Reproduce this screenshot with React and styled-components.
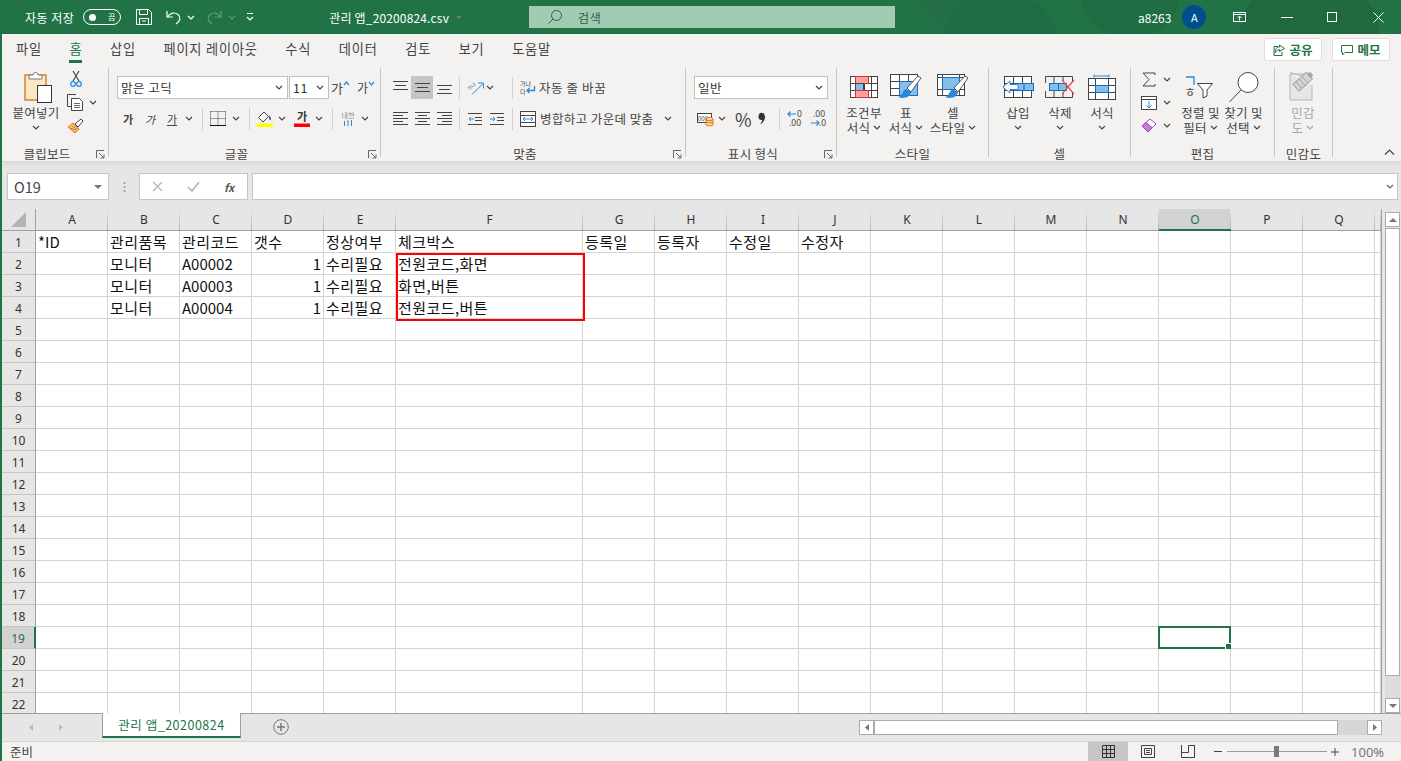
import React from "react";
import styled, { createGlobalStyle } from "styled-components";

const FONT = `"Noto Sans CJK KR", "Noto Sans", sans-serif`;
const GREEN = "#217346";
const DARK = "#444";
const BLUE = "#2b88d8";
const LIGHTBLUE = "#83beec";

const GlobalStyle = createGlobalStyle`
  html, body { margin: 0; padding: 0; height: 100%; overflow: hidden; background: #e6e6e6; }
  #root { height: 100%; }
  * { box-sizing: border-box; }
  svg { display: block; flex: none; overflow: visible; }
`;

const Window = styled.div`
  width: 1401px;
  height: 761px;
  display: flex;
  flex-direction: column;
  font-family: ${FONT};
  color: #444;
  overflow: hidden;
`;

/* ---------- title bar ---------- */
const TitleBar = styled.div`
  height: 34px;
  flex: none;
  display: flex;
  align-items: center;
  color: #fff;
  background-color: ${GREEN};
  background-image:
    radial-gradient(circle at 1000px 50px, #1f6d43 60px, transparent 61px),
    radial-gradient(circle at 1130px -10px, #1f6d43 50px, transparent 51px),
    radial-gradient(circle at 1310px 40px, #20693f 70px, transparent 71px),
    radial-gradient(circle at 950px -5px, #256f48 30px, transparent 31px);
`;

const Slot = styled.div`
  width: ${(p) => p.$w}px;
  margin-left: ${(p) => p.$ml || 0}px;
  flex: none;
  display: flex;
  align-items: center;
  justify-content: center;
`;

const TitleText = styled.span`
  margin-left: ${(p) => p.$ml || 0}px;
  font-size: ${(p) => p.$size || 12}px;
  letter-spacing: ${(p) => p.$ls || 0}px;
  white-space: nowrap;
`;

const Toggle = styled.div`
  width: 38px;
  height: 16px;
  margin-left: 9px;
  border: 1px solid #fff;
  border-radius: 8px;
  display: flex;
  align-items: center;
  padding: 0 5px;
  justify-content: space-between;
  font-size: 8px;
  line-height: 14px;
  &::before {
    content: "";
    width: 7px;
    height: 7px;
    border-radius: 50%;
    background: #fff;
  }
`;

const SearchBox = styled.div`
  width: 366px;
  height: 22px;
  margin-left: 66px;
  background: #a0cbb2;
  display: flex;
  align-items: center;
  padding-left: 19px;
  color: #2c5f43;
  font-size: 12px;
`;

const Avatar = styled.div`
  width: 24px;
  height: 24px;
  margin-left: 11px;
  border-radius: 50%;
  background: #004e8c;
  display: flex;
  align-items: center;
  justify-content: center;
  font-size: 11px;
`;

/* ---------- body under the title, with green edge ---------- */
const Main = styled.div`
  flex: 1;
  min-height: 0;
  display: flex;
  flex-direction: column;
  border-left: 2px solid ${GREEN};
`;

const TabStrip = styled.div`
  height: 32px;
  flex: none;
  background: #f3f2f1;
  display: flex;
  align-items: flex-start;
  padding: 4px 11px 0 14px;
  gap: 27.6px;
`;

const Tab = styled.div`
  height: 25px;
  line-height: 21px;
  font-size: 13.2px;
  letter-spacing: 0.8px;
  white-space: nowrap;
  color: ${(p) => (p.$active ? "#217346" : "#444")};
  border-bottom: 3px solid ${(p) => (p.$active ? GREEN : "transparent")};
`;

const TabSpacer = styled.div`
  flex: 1;
`;

const ShareBtn = styled.div`
  width: 58px;
  height: 23px;
  background: #fff;
  border: 1px solid #e1dfdd;
  border-radius: 2px;
  display: flex;
  align-items: center;
  justify-content: center;
  gap: 4px;
  font-size: 12.5px;
  font-weight: 700;
  color: ${GREEN};
`;

const ShareWrap = styled.div`
  display: flex;
  gap: 10px;
`;

/* ---------- ribbon ---------- */
const Ribbon = styled.div`
  height: 95px;
  flex: none;
  background: #f3f2f1;
  display: flex;
  padding: 2px 0 4px 0;
`;

const Group = styled.div`
  width: ${(p) => p.$w}px;
  flex: none;
  display: flex;
  flex-direction: column;
  border-right: 1px solid #c8c6c4;
`;

const GroupBody = styled.div`
  flex: 1;
  min-height: 0;
  display: flex;
  padding-left: ${(p) => p.$pl || 0}px;
`;

const GroupFoot = styled.div`
  height: 12px;
  flex: none;
  padding-top: 2px;
  display: grid;
  grid-template-columns: 1fr auto 1fr;
  align-items: center;
  font-size: 12.5px;
  letter-spacing: 0.3px;
  line-height: 14px;
  span { grid-column: 2; transform: translateX(${(p) => p.$shift || 0}px); white-space: nowrap; }
  svg { grid-column: 3; justify-self: end; margin-right: 3px; }
`;

const Rows = styled.div`
  display: flex;
  flex-direction: column;
  gap: 8px;
  padding-top: 8px;
`;

const ToolRow = styled.div`
  height: 23px;
  display: flex;
  align-items: center;
`;

const StackCol = styled.div`
  width: ${(p) => p.$w}px;
  margin-left: ${(p) => p.$ml || 0}px;
  flex: none;
  display: flex;
  flex-direction: column;
`;

const Picker = styled.div`
  width: ${(p) => p.$w}px;
  height: 23px;
  margin-left: ${(p) => p.$ml || 0}px;
  background: #fff;
  border: 1px solid #c1c1c1;
  display: flex;
  align-items: center;
  justify-content: space-between;
  padding: 0 4px 0 3px;
  font-size: 12.5px;
  letter-spacing: 0.5px;
  color: #333;
`;

const Divider = styled.div`
  width: 1px;
  height: 22px;
  margin-left: ${(p) => p.$ml || 0}px;
  flex: none;
  background: #d2d0ce;
`;

const ActiveBox = styled(Slot)`
  height: 23px;
  background: ${(p) => (p.$on ? "#c5c5c5" : "transparent")};
`;

const Glyph = styled.span`
  margin-left: ${(p) => p.$ml || 0}px;
  width: ${(p) => (p.$w ? `${p.$w}px` : "auto")};
  flex: none;
  text-align: center;
  font-size: ${(p) => p.$size || 12.5}px;
  font-weight: ${(p) => (p.$bold ? 700 : 400)};
  font-style: ${(p) => (p.$italic ? "italic" : "normal")};
  text-decoration: ${(p) => (p.$under ? "underline" : "none")};
  letter-spacing: ${(p) => p.$ls || 0}px;
  color: ${(p) => p.$color || "#444"};
  white-space: nowrap;
`;

const Raised = styled.div`
  flex: none;
  margin-bottom: 8px;
`;

const BigBtn = styled.div`
  width: ${(p) => p.$w}px;
  margin-left: ${(p) => p.$ml || 0}px;
  flex: none;
  display: flex;
  flex-direction: column;
  align-items: center;
  color: ${(p) => (p.$off ? "#a6a6a6" : "#444")};
`;

const BigIcon = styled.div`
  height: 37px;
  display: flex;
  align-items: center;
  justify-content: center;
  flex: none;
`;

const BigLine = styled.div`
  height: 15px;
  display: flex;
  align-items: center;
  justify-content: center;
  gap: 3px;
  font-size: 12.5px;
  letter-spacing: 0.3px;
  line-height: 15px;
  white-space: nowrap;
`;

const CollapseCol = styled.div`
  flex: 1;
  display: flex;
  align-items: flex-end;
  justify-content: flex-end;
  padding: 0 6px 2px 0;
`;

/* ---------- formula bar ---------- */
const FormulaBar = styled.div`
  height: 48px;
  flex: none;
  background: #e6e6e6;
  display: flex;
  align-items: flex-start;
  padding: 12px 3px 0 5px;
  background-image: linear-gradient(#d9d8d7, #e6e6e6 5px);
`;

const NameBox = styled.div`
  width: 102px;
  height: 27px;
  background: #fff;
  border: 1px solid #c6c6c6;
  display: flex;
  align-items: center;
  justify-content: space-between;
  padding: 0 6px;
  font-size: 14.5px;
  color: #444;
`;

const Caret = styled.div`
  width: 0;
  height: 0;
  border-left: ${(p) => p.$s || 4}px solid transparent;
  border-right: ${(p) => p.$s || 4}px solid transparent;
  border-top: ${(p) => p.$s || 4}px solid #777;
`;

const CaretUp = styled(Caret)`
  border-top: none;
  border-bottom: ${(p) => p.$s || 4}px solid #777;
`;

const GripDots = styled.div`
  width: 3px;
  height: 12px;
  margin: 8px 13px 0 14px;
  flex: none;
  background-image: radial-gradient(circle, #a6a6a6 1px, transparent 1.2px);
  background-size: 3px 4px;
`;

const FnButtons = styled.div`
  width: 109px;
  height: 27px;
  flex: none;
  background: #fff;
  border: 1px solid #c6c6c6;
  display: flex;
  align-items: center;
  padding-left: 12px;
  gap: 24px;
`;

const FormulaInput = styled.div`
  flex: 1;
  height: 27px;
  margin-left: 4px;
  background: #fff;
  border: 1px solid #c6c6c6;
  display: flex;
  align-items: center;
  justify-content: flex-end;
  padding-right: 3px;
`;

/* ---------- sheet ---------- */
const SheetArea = styled.div`
  flex: 1;
  min-height: 0;
  display: flex;
  background: #e6e6e6;
`;

const Grid = styled.div`
  width: 1380px;
  flex: none;
  display: flex;
  flex-direction: column;
  overflow: hidden;
  border-right: 1px solid #a0a0a0;
`;

const HeadRow = styled.div`
  height: 22px;
  flex: none;
  display: flex;
`;

const Corner = styled.div`
  width: 34px;
  flex: none;
  display: flex;
  justify-content: center;
  align-items: flex-end;
  padding: 0 0 3px 0;
  border-bottom: 1px solid #9f9f9f;
  border-right: 1px solid #9f9f9f;
`;

const ColHead = styled.div`
  width: ${(p) => p.$w}px;
  flex: none;
  display: flex;
  align-items: center;
  justify-content: center;
  font-family: "Noto Sans", sans-serif;
  font-size: 12px;
  color: ${(p) => (p.$sel ? GREEN : "#333")};
  background: ${(p) => (p.$sel ? "#d2d2d2" : "transparent")};
  position: relative;
  border-bottom: ${(p) => (p.$sel ? `2px solid ${GREEN}` : "1px solid #9f9f9f")};
  &::after {
    content: "";
    position: absolute;
    right: 0;
    top: 0;
    bottom: 0;
    width: 1px;
    background: linear-gradient(#e6e6e6, #b1b1b1);
  }
`;

const Body = styled.div`
  position: relative;
  flex: 1;
  min-height: 0;
  overflow: hidden;
`;

const Row = styled.div`
  height: 22px;
  display: flex;
`;

const RowHead = styled.div`
  width: 34px;
  flex: none;
  display: flex;
  align-items: center;
  justify-content: center;
  padding-top: 2px;
  font-family: "Noto Sans", sans-serif;
  font-size: 12px;
  color: ${(p) => (p.$sel ? GREEN : "#333")};
  background: ${(p) => (p.$sel ? "#d2d2d2" : "#e6e6e6")};
  border-bottom: 1px solid #c6c6c6;
  border-right: ${(p) => (p.$sel ? `2px solid ${GREEN}` : "1px solid #9f9f9f")};
`;

const Cell = styled.div`
  position: relative;
  width: ${(p) => p.$w}px;
  flex: none;
  background: #fff;
  border-right: 1px solid #d4d4d4;
  border-bottom: 1px solid #d4d4d4;
  padding: 0 2px;
  font-size: 15px;
  letter-spacing: ${(p) => (p.$latin ? 0 : 0.45)}px;
  line-height: 22px;
  color: #111;
  text-align: ${(p) => (p.$num ? "right" : "left")};
  white-space: nowrap;
  ${(p) =>
    p.$sel &&
    `
    &::before {
      content: "";
      position: absolute;
      inset: -1px;
      border: 2px solid ${GREEN};
    }
    &::after {
      content: "";
      position: absolute;
      right: -2px;
      bottom: -2px;
      width: 6px;
      height: 6px;
      background: ${GREEN};
      border: 1px solid #fff;
      border-width: 1px 0 0 1px;
    }
  `}
`;

const RedBox = styled.div`
  position: absolute;
  left: 394px;
  top: 22px;
  width: 189px;
  height: 68px;
  border: 2px solid #f00;
  pointer-events: none;
`;

const VScroll = styled.div`
  width: 15px;
  margin-left: 3px;
  flex: none;
  display: flex;
  flex-direction: column;
  padding-top: 3px;
`;

const ScrollBtn = styled.div`
  width: 15px;
  height: 15px;
  flex: none;
  background: #fff;
  border: 1px solid #ababab;
  display: flex;
  align-items: center;
  justify-content: center;
`;

const VThumb = styled.div`
  height: 448px;
  flex: none;
  margin-top: 1px;
  background: #fff;
  border: 1px solid #ababab;
`;

const VTrack = styled.div`
  flex: 1;
  background: #dcdcdc;
`;

/* ---------- sheet tabs ---------- */
const TabBar = styled.div`
  height: 28px;
  flex: none;
  background: #e6e6e6;
  display: flex;
  align-items: flex-start;
  border-top: 1px solid #9f9f9f;
`;

const SheetTab = styled.div`
  width: 139px;
  height: 25px;
  margin-top: -1px;
  margin-left: 34px;
  flex: none;
  background: #fff;
  border-left: 1px solid #9f9f9f;
  border-right: 1px solid #9f9f9f;
  border-bottom: 2px solid ${GREEN};
  display: flex;
  align-items: center;
  justify-content: center;
  font-size: 12.5px;
  letter-spacing: 0.5px;
  color: ${GREEN};
`;

const NavArrows = styled.div`
  width: 66px;
  height: 26px;
  flex: none;
  display: flex;
  align-items: center;
  justify-content: space-between;
  padding: 0 5px 0 27px;
`;

const AddSheet = styled(Slot)`
  margin-top: 5px;
`;

const HScroll = styled.div`
  width: 523px;
  height: 15px;
  margin: 6px 19px 0 auto;
  flex: none;
  display: flex;
`;

const HThumb = styled.div`
  width: 464px;
  flex: none;
  background: #fff;
  border: 1px solid #ababab;
`;

const HTrack = styled.div`
  flex: 1;
  background: #d6d6d6;
`;

/* ---------- status bar ---------- */
const StatusBar = styled.div`
  height: 20px;
  flex: none;
  background: #f3f2f1;
  border-top: 1px solid #d4d4d4;
  display: flex;
  align-items: center;
  font-size: 12.5px;
  padding-left: 8px;
`;

const ViewBtn = styled.div`
  width: 40px;
  height: 19px;
  flex: none;
  margin-left: ${(p) => p.$ml || 0}px;
  display: flex;
  align-items: center;
  justify-content: center;
  background: ${(p) => (p.$on ? "#c5c5c5" : "transparent")};
`;

const ZoomTrack = styled.div`
  position: relative;
  width: 100px;
  height: 1px;
  margin-left: 5px;
  flex: none;
  background: #9a9a9a;
  &::after {
    content: "";
    position: absolute;
    left: 47px;
    top: -5px;
    width: 5px;
    height: 11px;
    background: #7a7a7a;
  }
`;

const ZoomPct = styled.span`
  margin-left: 12px;
  font-family: "Noto Sans", sans-serif;
  font-size: 13px;
  color: #777;
`;

/* ---------- icons ---------- */
const Chev = ({ c = DARK, w = 8 }) => (
  <svg width={w} height="5" viewBox="0 0 8 5">
    <path d="M1 1l3 3 3-3" fill="none" stroke={c} strokeWidth="1.2" />
  </svg>
);

const ChevSlot = ({ ml }) => (
  <Slot $w={8} $ml={ml}>
    <Chev />
  </Slot>
);

const Launcher = () => (
  <svg width="9" height="9" viewBox="0 0 9 9">
    <path d="M.5 8V.5H8M3 3l5 5M8 4.500V8H4.500" fill="none" stroke="#666" />
  </svg>
);

const Lines = ({ y = [], x = [] }) => (
  <svg width="15" height="15" viewBox="0 0 15 15">
    {y.map((v, i) => (
      <path key={i} d={`M${x[i][0]} ${v + 0.5}H${x[i][1]}`} stroke={DARK} />
    ))}
  </svg>
);

const AL = {
  top: { y: [1, 5, 9], x: [[0, 15], [2, 13], [0, 15]] },
  mid: { y: [3, 7, 11], x: [[0, 15], [2, 13], [0, 15]] },
  bot: { y: [5, 9, 13], x: [[0, 15], [2, 13], [0, 15]] },
  left: { y: [1, 4, 7, 10, 13], x: [[0, 15], [0, 10], [0, 15], [0, 10], [0, 15]] },
  center: { y: [1, 4, 7, 10, 13], x: [[0, 15], [3, 12], [0, 15], [3, 12], [0, 15]] },
  right: { y: [1, 4, 7, 10, 13], x: [[0, 15], [5, 15], [0, 15], [5, 15], [0, 15]] },
};

const PasteIcon = () => (
  <svg width="30" height="32" viewBox="-3 0 30 32">
    <rect x="1" y="4" width="21" height="25" fill="#fbe6c8" stroke="#d9832b" strokeWidth="1.5" />
    <path d="M5 8V4h4a2.500 2.500 0 0 1 5 0h4v4z" fill="#fff" stroke="#777" />
    <rect x="13.500" y="14.500" width="14" height="17" fill="#fff" stroke="#333" />
  </svg>
);

const ScissorsIcon = () => (
  <svg width="12" height="17" viewBox="0 0 12 17">
    <path d="M3 10L9 0M9 10L3 0" stroke="#444" strokeWidth="1.2" fill="none" />
    <circle cx="3" cy="13" r="2.300" fill="none" stroke={BLUE} strokeWidth="1.3" />
    <circle cx="9" cy="13" r="2.300" fill="none" stroke={BLUE} strokeWidth="1.3" />
  </svg>
);

const CopyIcon = () => (
  <svg width="17" height="17" viewBox="0 0 17 17">
    <path d="M9 .5H.5v12H4" fill="none" stroke="#444" />
    <path d="M4.500 4.500h8l3 3v9h-11z" fill="#fff" stroke="#444" />
    <path d="M7 9.500h6M7 11.500h6M7 13.500h6" stroke="#666" />
  </svg>
);

const BrushIcon = () => (
  <svg width="17" height="16" viewBox="0 0 17 16">
    <path d="M1 9l5-4 6 6-4 4z" fill="#f6c27c" stroke="#d9761c" />
    <path d="M3 10l6 2M5 8l5 3" stroke="#d9761c" />
    <path d="M8 6l6-5 2 2-5 6z" fill="#fff" stroke="#444" />
  </svg>
);

const BorderIcon = () => (
  <svg width="16" height="15" viewBox="0 0 16 15">
    <path d="M.5.5h15M.5 7.500h15M.5.5v14M8 .5v14M15.500.5v14" fill="none" stroke="#444" strokeDasharray="1 1" />
    <path d="M0 14.500h16" stroke="#111" />
  </svg>
);

const FillIcon = () => (
  <svg width="16" height="16" viewBox="0 0 16 16">
    <path d="M7 1L1.500 6.500 6 11l5.500-5.500z" fill="#fff" stroke="#444" />
    <path d="M12 4.500c2 1.500 2.500 3 1.700 4.500-1.200.6-2-.8-1.700-4.500z" fill="#1f6cb8" />
    <rect y="12.500" width="16" height="3.500" fill="#ff0" />
  </svg>
);

const TextColorIcon = () => (
  <svg width="16" height="16" viewBox="0 0 16 16">
    <text x="8" y="10" textAnchor="middle" fontSize="11" fontWeight="700" fontFamily={FONT} fill="#333">가</text>
    <rect y="12.500" width="16" height="3.500" fill="#f00" />
  </svg>
);

const PhoneticIcon = () => (
  <svg width="16" height="17" viewBox="0 0 16 17">
    <text x="8" y="8" textAnchor="middle" fontSize="7" fontFamily={FONT} fill="#888">내천</text>
    <path d="M4.500 11v5M8 10v6M11.500 10v6" stroke={BLUE} />
  </svg>
);

const OrientIcon = () => (
  <svg width="17" height="14" viewBox="0 0 17 14">
    <text x="1" y="9" fontSize="5" fontFamily={FONT} fill="#666" transform="rotate(-40 3 8)">가나</text>
    <path d="M5 13.500L16 2.500M11 2h5.500v5.500" fill="none" stroke={BLUE} />
  </svg>
);

const IndentIcon = ({ rev }) => (
  <svg width="14" height="12" viewBox="0 0 14 12">
    <path d="M0 .5h14M7 4.500h7M7 7.500h7M0 11.500h14" stroke="#444" />
    {rev ? (
      <path d="M6 6H1M3 4L1 6l2 2" fill="none" stroke={BLUE} />
    ) : (
      <path d="M0 6h5M3 4l2 2-2 2" fill="none" stroke={BLUE} />
    )}
  </svg>
);

const WrapIcon = () => (
  <svg width="16" height="16" viewBox="0 0 16 16">
    <text x="0" y="6" fontSize="6" fontFamily={FONT} fill="#444">가나</text>
    <text x="0" y="14" fontSize="6" fontFamily={FONT} fill="#444">다</text>
    <path d="M14.500 6v4.500H7M9.500 8L7 10.500 9.500 13" fill="none" stroke={BLUE} strokeWidth="1.3" />
  </svg>
);

const MergeIcon = () => (
  <svg width="16" height="16" viewBox="0 0 16 16">
    <rect x=".5" y=".5" width="15" height="15" fill="#fff" stroke="#444" />
    <path d="M0 4.500h16M0 11.500h16" stroke="#444" />
    <path d="M3 8h10M5 6L3 8l2 2M11 6l2 2-2 2" fill="none" stroke={BLUE} />
  </svg>
);

const AccountIcon = () => (
  <svg width="17" height="16" viewBox="0 0 17 16">
    <rect x=".5" y="2.500" width="14" height="9" fill="#fff" stroke="#444" />
    <text x="6" y="9.500" textAnchor="middle" fontSize="6" fontFamily={FONT} fill="#444">000</text>
    <path d="M9 8v6c0 1 7 1 7 0V8" fill="#fbd7a5" stroke="#d9761c" />
    <ellipse cx="12.500" cy="8" rx="3.500" ry="1.700" fill="#fbd7a5" stroke="#d9761c" />
    <path d="M9 11c0 1 7 1 7 0" fill="none" stroke="#d9761c" />
  </svg>
);

const CommaIcon = () => (
  <svg width="8" height="13" viewBox="0 0 8 13">
    <path d="M1.500 1.500c2-1.500 5-.5 5.500 3C7.300 8 5 11 1.500 12.500c1.500-1.500 2.500-3 2.700-4.500C2 8.500 .5 7 .5 5c0-1.500.4-2.800 1-3.500z" fill="#333" />
  </svg>
);

const DecUpIcon = () => (
  <svg width="16" height="17" viewBox="0 0 16 17">
    <text x="10" y="7" fontSize="8.5" fontFamily="Noto Sans" fill="#444">0</text>
    <text x="2" y="15.500" fontSize="8.5" fontFamily="Noto Sans" fill="#444">.00</text>
    <path d="M9 4H1M3.500 1.500L1 4l2.500 2.500" fill="none" stroke={BLUE} strokeWidth="1.2" />
  </svg>
);

const DecDownIcon = () => (
  <svg width="16" height="17" viewBox="0 0 16 17">
    <text x="2" y="7" fontSize="8.5" fontFamily="Noto Sans" fill="#444">.00</text>
    <text x="8" y="15.500" fontSize="8.5" fontFamily="Noto Sans" fill="#444">.0</text>
    <path d="M0 13h8M5.500 10.500L8 13l-2.500 2.500" fill="none" stroke={BLUE} strokeWidth="1.2" />
  </svg>
);

const BlueUp = () => (
  <svg width="7" height="5" viewBox="0 0 7 5">
    <path d="M1 4l2.500-3L6 4" fill="none" stroke={BLUE} strokeWidth="1.2" />
  </svg>
);

const BlueDown = () => (
  <svg width="7" height="5" viewBox="0 0 7 5">
    <path d="M1 1l2.500 3L6 1" fill="none" stroke={BLUE} strokeWidth="1.2" />
  </svg>
);

const SheetGrid = ({ cols = [7, 14, 21], rows = [7, 14] }) => (
  <>
    <rect x=".5" y=".5" width="27" height="21" fill="#fff" stroke="#444" />
    {cols.map((c) => (
      <path key={c} d={`M${c}.5 0v22`} stroke="#444" />
    ))}
    {rows.map((r) => (
      <path key={r} d={`M0 ${r}.5h28`} stroke="#444" />
    ))}
  </>
);

const Paintbrush = () => (
  <>
    <path d="M17 14L28 2l3 2-10 14z" fill="#fff" stroke="#555" />
    <path d="M16 15c-3 1-3 4-5 6-1 1-2 2-3 2 5 2 12 1 13-5z" fill={BLUE} />
  </>
);

const CondIcon = () => (
  <svg width="28" height="22" viewBox="0 0 28 22">
    <SheetGrid />
    <rect x="5.500" y=".5" width="13" height="7" fill="#ff9da3" stroke="#d13438" />
    <rect x="5.500" y="7.500" width="8" height="7" fill={LIGHTBLUE} stroke="#444" />
    <rect x="5.500" y="14.500" width="13" height="7" fill="#ff9da3" stroke="#d13438" />
  </svg>
);

const TableIcon = () => (
  <svg width="32" height="25" viewBox="0 0 32 25">
    <SheetGrid cols={[9, 18]} />
    <rect x="9.500" y="7.500" width="18" height="14" fill={LIGHTBLUE} stroke="#1f6cb8" />
    <Paintbrush />
  </svg>
);

const CellStyleIcon = () => (
  <svg width="32" height="25" viewBox="0 0 32 25">
    <SheetGrid cols={[5, 22]} rows={[3, 15]} />
    <rect x="5.500" y="3.500" width="17" height="12" fill={LIGHTBLUE} stroke="#1f6cb8" />
    <Paintbrush />
  </svg>
);

const InsertIcon = () => (
  <svg width="32" height="22" viewBox="0 0 32 22">
    <g transform="translate(2 0)">
      <SheetGrid cols={[9, 18]} />
    </g>
    <rect x="12.500" y="7.500" width="19" height="7" fill={LIGHTBLUE} stroke="#106ebe" />
    <path d="M22 7v8" stroke="#106ebe" />
    <path d="M16 8.500H8V5l-7 6 7 6v-3.500h8z" fill="#fff" stroke={BLUE} />
  </svg>
);

const DeleteIcon = () => (
  <svg width="30" height="22" viewBox="0 0 30 22">
    <path d="M.5 7V.5h27V6M.5 15v6.500h27V17M9 0v7M18 0v5M9 15v7M18 17v5" fill="none" stroke="#444" />
    <rect x="4.500" y="7.500" width="9" height="7" fill={LIGHTBLUE} stroke="#106ebe" />
    <rect x="13.500" y="7.500" width="8" height="7" fill={LIGHTBLUE} stroke="#106ebe" />
    <path d="M17 4l12 14M29 4L17 18" stroke="#e8484d" strokeWidth="1.2" />
  </svg>
);

const FormatIcon = () => (
  <svg width="28" height="26" viewBox="0 0 28 26">
    <path d="M6 .5v3M21 .5v3M6 2h15" stroke={BLUE} fill="none" />
    <g transform="translate(0 4)">
      <SheetGrid cols={[7, 20]} />
      <rect x="7.500" y="7.500" width="13" height="7" fill={LIGHTBLUE} stroke="#106ebe" />
    </g>
  </svg>
);

const SumIcon = () => (
  <svg width="14" height="15" viewBox="0 0 14 15">
    <path d="M13 3V1H1l6 6.500L1 14h12v-2" fill="none" stroke="#444" />
  </svg>
);

const FillDownIcon = () => (
  <svg width="16" height="14" viewBox="0 0 16 14">
    <rect x=".5" y=".5" width="15" height="13" fill="#fff" stroke="#444" />
    <path d="M0 3.500h16" stroke="#444" />
    <path d="M8 5v7M5.500 9.500L8 12l2.500-2.500" fill="none" stroke={BLUE} />
  </svg>
);

const EraserIcon = () => (
  <svg width="16" height="15" viewBox="0 0 16 15">
    <path d="M1 8l8-7 6 5-8 8z" fill="#fff" stroke="#a347ba" />
    <path d="M1 8l4-3.500 6 5L7 14z" fill="#c87ad8" stroke="#a347ba" />
  </svg>
);

const SortIcon = () => (
  <svg width="32" height="24" viewBox="0 0 32 24">
    <path d="M1 2h8v8" fill="none" stroke={BLUE} strokeWidth="1.3" />
    <text x="5" y="22" textAnchor="middle" fontSize="12" fontFamily={FONT} fill="#444">ㅎ</text>
    <path d="M12.500 8.500h15L22 15v6l-4 2v-8z" fill="#fff" stroke="#444" />
  </svg>
);

const FindIcon = () => (
  <svg width="32" height="32" viewBox="0 0 32 32">
    <circle cx="20" cy="11.500" r="10" fill="#fff" stroke="#444" />
    <path d="M13 19L1.500 31" stroke="#444" />
  </svg>
);

const SensIcon = () => (
  <svg width="28" height="30" viewBox="0 0 28 30">
    <path d="M1 2h15v3L1 .5M1 2v26h22V13" fill="#e7e6e5" stroke="#b5b5b5" />
    <g transform="rotate(-42 14 10)">
      <rect x="5" y="5" width="18" height="9" fill="#d6d6d6" stroke="#a6a6a6" />
      <path d="M9 5v9M13 5v9M17 5v9" stroke="#a6a6a6" />
      <rect x="22" y="7" width="4" height="5" fill="#a6a6a6" />
    </g>
  </svg>
);

const SaveIcon = () => (
  <svg width="16" height="16" viewBox="0 0 16 16">
    <path d="M.5.5h12l3 3v12H.5zM3.500.5v5h8v-5M3.500 15.500v-6h9v6M6 12h4" fill="none" stroke="#fff" />
  </svg>
);

const UndoIcon = ({ c = "#fff", flip }) => (
  <svg width="15" height="15" viewBox="0 0 15 15">
    <g transform={flip ? "translate(15 0) scale(-1 1)" : undefined}>
      <path d="M1 1v6h6M1.500 7C4 2.500 9 2 12 4.500s2.500 6.500-2 9.500" fill="none" stroke={c} strokeWidth="1.2" />
    </g>
  </svg>
);

const QatMenuIcon = () => (
  <svg width="8" height="8" viewBox="0 0 8 8">
    <path d="M1 .5h6" stroke="#fff" />
    <path d="M1 4l3 3 3-3" fill="none" stroke="#fff" strokeWidth="1.2" />
  </svg>
);

const SearchIcon = () => (
  <svg width="14" height="14" viewBox="0 0 14 14">
    <circle cx="8.500" cy="5.500" r="5" fill="none" stroke="#2c5f43" />
    <path d="M5 9L.5 13.500" stroke="#2c5f43" />
  </svg>
);

const DisplayIcon = () => (
  <svg width="13" height="10" viewBox="0 0 13 10">
    <path d="M.5.5h12v9H.5zM0 2.500h13M6.500 8.500V4.500M4.500 6l2-2 2 2" fill="none" stroke="#fff" />
  </svg>
);

const ShareIcon = () => (
  <svg width="12" height="12" viewBox="0 0 12 12">
    <path d="M5 2.500H1v9h8V8M6.500 1v2C3 3 2 6 2 9c1-2 3-3.500 4.500-3.500v2l5-3z" fill="none" stroke={GREEN} />
  </svg>
);

const MemoIcon = () => (
  <svg width="12" height="12" viewBox="0 0 12 12">
    <path d="M.5 1.500h11v7H4L1.500 11V8.500h-1z" fill="none" stroke={GREEN} />
  </svg>
);

const COLS = ["A","B","C","D","E","F","G","H","I","J","K","L","M","N","O","P","Q",""];
const colWidth = (c) => (c === "F" ? 187 : c === "" ? 6 : 72);

const DATA = {
  1: { A: "*ID", B: "관리품목", C: "관리코드", D: "갯수", E: "정상여부", F: "체크박스", G: "등록일", H: "등록자", I: "수정일", J: "수정자" },
  2: { B: "모니터", C: "A00002", D: "1", E: "수리필요", F: "전원코드,화면" },
  3: { B: "모니터", C: "A00003", D: "1", E: "수리필요", F: "화면,버튼" },
  4: { B: "모니터", C: "A00004", D: "1", E: "수리필요", F: "전원코드,버튼" },
};

const TABS = ["파일", "홈", "삽입", "페이지 레이아웃", "수식", "데이터", "검토", "보기", "도움말"];
const ROWS = Array.from({ length: 22 }, (_, i) => i + 1);

const Big = ({ w, ml, off, icon, lines, chevOn }) => (
  <BigBtn $w={w} $ml={ml} $off={off}>
    <BigIcon>{icon}</BigIcon>
    {lines.map((t, i) => (
      <BigLine key={i}>
        {t}
        {i === lines.length - 1 && chevOn && <Chev c={off ? "#a6a6a6" : DARK} />}
      </BigLine>
    ))}
    {!chevOn && (
      <BigLine>
        <Chev />
      </BigLine>
    )}
  </BigBtn>
);

const Foot = ({ label, launcher, shift }) => (
  <GroupFoot $shift={shift}>
    <span>{label}</span>
    {launcher && <Launcher />}
  </GroupFoot>
);

export default function App() {
  return (
    <Window>
      <GlobalStyle />
      <TitleBar>
        <TitleText $ml={25} $ls={0.5}>자동 저장</TitleText>
        <Toggle>끔</Toggle>
        <Slot $w={16} $ml={15}><SaveIcon /></Slot>
        <Slot $w={15} $ml={14}><UndoIcon /></Slot>
        <Slot $w={8} $ml={6}><Chev c="#fff" /></Slot>
        <Slot $w={15} $ml={12}><UndoIcon c="#5f9a7c" flip /></Slot>
        <Slot $w={8} $ml={6}><Chev c="#5f9a7c" /></Slot>
        <Slot $w={8} $ml={10}><QatMenuIcon /></Slot>
        <TitleText $ml={75} $ls={0.15}>관리 앱_20200824.csv</TitleText>
        <Slot $w={8} $ml={6}><Caret $s={3} /></Slot>
        <SearchBox>
          <SearchIcon />
          <TitleText $ml={16} $ls={0.8}>검색</TitleText>
        </SearchBox>
        <TitleText $ml={243}>a8263</TitleText>
        <Avatar>A</Avatar>
        <Slot $w={13} $ml={27}><DisplayIcon /></Slot>
        <Slot $w={10} $ml={36}>
          <svg width="12" height="1" viewBox="0 0 12 1"><path d="M0 .5h12" stroke="#fff" /></svg>
        </Slot>
        <Slot $w={10} $ml={35}>
          <svg width="10" height="10" viewBox="0 0 10 10"><rect x=".5" y=".5" width="9" height="9" fill="none" stroke="#fff" /></svg>
        </Slot>
        <Slot $w={10} $ml={36}>
          <svg width="11" height="11" viewBox="0 0 11 11"><path d="M.5.5l10 10M10.500.5l-10 10" stroke="#fff" /></svg>
        </Slot>
      </TitleBar>

      <Main>
        <TabStrip>
          {TABS.map((t, i) => (
            <Tab key={t} $active={i === 1}>{t}</Tab>
          ))}
          <TabSpacer />
          <ShareWrap>
            <ShareBtn><ShareIcon />공유</ShareBtn>
            <ShareBtn><MemoIcon />메모</ShareBtn>
          </ShareWrap>
        </TabStrip>

        <Ribbon>
          <Group $w={107}>
            <GroupBody>
              <Big w={52} ml={8} icon={<PasteIcon />} lines={["붙여넣기"]} />
              <StackCol $w={34} $ml={5}>
                <ToolRow><Slot $w={17}><ScissorsIcon /></Slot></ToolRow>
                <ToolRow><Slot $w={17}><CopyIcon /></Slot><ChevSlot ml={5} /></ToolRow>
                <ToolRow><Slot $w={17}><BrushIcon /></Slot></ToolRow>
              </StackCol>
            </GroupBody>
            <Foot label="클립보드" launcher shift={-8} />
          </Group>

          <Group $w={272}>
            <GroupBody $pl={8}>
              <Rows>
                <ToolRow>
                  <Picker $w={171}>맑은 고딕<Chev /></Picker>
                  <Picker $w={40} $ml={1}>11<Chev /></Picker>
                  <Glyph $ml={2} $size={13}>가</Glyph>
                  <Raised><BlueUp /></Raised>
                  <Glyph $ml={7} $size={12}>가</Glyph>
                  <Raised><BlueDown /></Raised>
                </ToolRow>
                <ToolRow>
                  <Glyph $w={22} $bold $size={11}>가</Glyph>
                  <Glyph $w={22} $italic $size={11}>가</Glyph>
                  <Glyph $w={22} $under $size={11}>가</Glyph>
                  <ChevSlot ml={2} />
                  <Divider $ml={9} />
                  <Slot $w={16} $ml={7}><BorderIcon /></Slot>
                  <ChevSlot ml={6} />
                  <Divider $ml={9} />
                  <Slot $w={16} $ml={7}><FillIcon /></Slot>
                  <ChevSlot ml={5} />
                  <Slot $w={16} $ml={8}><TextColorIcon /></Slot>
                  <ChevSlot ml={5} />
                  <Divider $ml={9} />
                  <Slot $w={16} $ml={7}><PhoneticIcon /></Slot>
                  <ChevSlot ml={5} />
                </ToolRow>
              </Rows>
            </GroupBody>
            <Foot label="글꼴" launcher shift={-8} />
          </Group>

          <Group $w={305}>
            <GroupBody $pl={12}>
              <Rows>
                <ToolRow>
                  <Slot $w={15}><Lines {...AL.top} /></Slot>
                  <ActiveBox $w={22} $ml={3} $on><Lines {...AL.mid} /></ActiveBox>
                  <Slot $w={15} $ml={4}><Lines {...AL.bot} /></Slot>
                  <Divider $ml={7} />
                  <Slot $w={17} $ml={7}><OrientIcon /></Slot>
                  <ChevSlot ml={2} />
                  <Divider $ml={18} />
                  <Slot $w={16} $ml={7}><WrapIcon /></Slot>
                  <Glyph $ml={3} $ls={0.6}>자동 줄 바꿈</Glyph>
                </ToolRow>
                <ToolRow>
                  <Slot $w={15}><Lines {...AL.left} /></Slot>
                  <Slot $w={15} $ml={7}><Lines {...AL.center} /></Slot>
                  <Slot $w={15} $ml={7}><Lines {...AL.right} /></Slot>
                  <Divider $ml={7} />
                  <Slot $w={14} $ml={8}><IndentIcon rev /></Slot>
                  <Slot $w={14} $ml={8}><IndentIcon /></Slot>
                  <Divider $ml={8} />
                  <Slot $w={16} $ml={7}><MergeIcon /></Slot>
                  <Glyph $ml={4} $ls={0.4}>병합하고 가운데 맞춤</Glyph>
                  <ChevSlot ml={10} />
                </ToolRow>
              </Rows>
            </GroupBody>
            <Foot label="맞춤" launcher shift={-8} />
          </Group>

          <Group $w={151}>
            <GroupBody $pl={8}>
              <Rows>
                <ToolRow>
                  <Picker $w={134}>일반<Chev /></Picker>
                </ToolRow>
                <ToolRow>
                  <Slot $w={17} $ml={3}><AccountIcon /></Slot>
                  <ChevSlot ml={4} />
                  <Glyph $ml={9} $w={15} $size={18}>%</Glyph>
                  <Slot $w={8} $ml={8}><CommaIcon /></Slot>
                  <Divider $ml={13} />
                  <Slot $w={16} $ml={7}><DecUpIcon /></Slot>
                  <Slot $w={16} $ml={8}><DecDownIcon /></Slot>
                </ToolRow>
              </Rows>
            </GroupBody>
            <Foot label="표시 형식" launcher shift={-8} />
          </Group>

          <Group $w={152}>
            <GroupBody $pl={6}>
              <Big w={42} icon={<CondIcon />} lines={["조건부", "서식"]} chevOn />
              <Big w={42} icon={<TableIcon />} lines={["표", "서식"]} chevOn />
              <Big w={52} icon={<CellStyleIcon />} lines={["셀", "스타일"]} chevOn />
            </GroupBody>
            <Foot label="스타일" />
          </Group>

          <Group $w={142}>
            <GroupBody $pl={8}>
              <Big w={42} icon={<InsertIcon />} lines={["삽입"]} />
              <Big w={42} icon={<DeleteIcon />} lines={["삭제"]} />
              <Big w={42} icon={<FormatIcon />} lines={["서식"]} />
            </GroupBody>
            <Foot label="셀" />
          </Group>

          <Group $w={144}>
            <GroupBody $pl={10}>
              <StackCol $w={38}>
                <ToolRow><Slot $w={16}><SumIcon /></Slot><ChevSlot ml={6} /></ToolRow>
                <ToolRow><Slot $w={16}><FillDownIcon /></Slot><ChevSlot ml={6} /></ToolRow>
                <ToolRow><Slot $w={16}><EraserIcon /></Slot><ChevSlot ml={6} /></ToolRow>
              </StackCol>
              <Big w={43} icon={<SortIcon />} lines={["정렬 및", "필터"]} chevOn />
              <Big w={43} icon={<FindIcon />} lines={["찾기 및", "선택"]} chevOn />
            </GroupBody>
            <Foot label="편집" />
          </Group>

          <Group $w={58}>
            <GroupBody>
              <Big w={56} off icon={<SensIcon />} lines={["민감", "도"]} chevOn />
            </GroupBody>
            <Foot label="민감도" />
          </Group>

          <CollapseCol>
            <svg width="11" height="6" viewBox="0 0 11 6">
              <path d="M1 5.500L5.500 1 10 5.500" fill="none" stroke="#444" strokeWidth="1.2" />
            </svg>
          </CollapseCol>
        </Ribbon>

        <FormulaBar>
          <NameBox>O19<Caret /></NameBox>
          <GripDots />
          <FnButtons>
            <svg width="11" height="11" viewBox="0 0 11 11"><path d="M1 1l9 9M10 1l-9 9" stroke="#b5b5b5" strokeWidth="1.4" /></svg>
            <svg width="13" height="11" viewBox="0 0 13 11"><path d="M1 6l4 4 7-9" fill="none" stroke="#b5b5b5" strokeWidth="1.6" /></svg>
            <Glyph $size={11} $italic $bold $color="#555">fx</Glyph>
          </FnButtons>
          <FormulaInput><Chev c="#666" /></FormulaInput>
        </FormulaBar>

        <SheetArea>
          <Grid>
            <HeadRow>
              <Corner>
                <svg width="15" height="15" viewBox="0 0 15 15"><path d="M15 0v15H0z" fill="#b4b4b4" /></svg>
              </Corner>
              {COLS.map((c, i) => (
                <ColHead key={i} $w={colWidth(c)} $sel={c === "O"}>{c}</ColHead>
              ))}
            </HeadRow>
            <Body>
              {ROWS.map((r) => (
                <Row key={r}>
                  <RowHead $sel={r === 19}>{r}</RowHead>
                  {COLS.map((c, i) => {
                    const v = DATA[r] && DATA[r][c];
                    return (
                      <Cell
                        key={i}
                        $w={colWidth(c)}
                        $num={v === "1"}
                        $latin={v && /^[*A-Z0-9]/.test(v)}
                        $sel={r === 19 && c === "O"}
                      >
                        {v}
                      </Cell>
                    );
                  })}
                </Row>
              ))}
              <RedBox />
            </Body>
          </Grid>
          <VScroll>
            <ScrollBtn><CaretUp $s={4} /></ScrollBtn>
            <VThumb />
            <VTrack />
            <ScrollBtn><Caret $s={4} /></ScrollBtn>
          </VScroll>
        </SheetArea>

        <TabBar>
          <NavArrows>
            <svg width="4" height="7" viewBox="0 0 4 7"><path d="M4 0v7L0 3.500z" fill="#bbb" /></svg>
            <svg width="4" height="7" viewBox="0 0 4 7"><path d="M0 0v7l4-3.500z" fill="#bbb" /></svg>
          </NavArrows>
          <SheetTab>관리 앱_20200824</SheetTab>
          <AddSheet $w={16} $ml={32}>
            <svg width="16" height="16" viewBox="0 0 16 16">
              <circle cx="8" cy="8" r="7.300" fill="none" stroke="#777" />
              <path d="M4 8h8M8 4v8" stroke="#777" strokeWidth="1.500" />
            </svg>
          </AddSheet>
          <HScroll>
            <ScrollBtn><svg width="4" height="7" viewBox="0 0 4 7"><path d="M4 0v7L0 3.500z" fill="#777" /></svg></ScrollBtn>
            <HThumb />
            <HTrack />
            <ScrollBtn><svg width="4" height="7" viewBox="0 0 4 7"><path d="M0 0v7l4-3.500z" fill="#777" /></svg></ScrollBtn>
          </HScroll>
        </TabBar>

        <StatusBar>
          준비
          <ViewBtn $ml={1055} $on>
            <svg width="13" height="13" viewBox="0 0 13 13"><path d="M.5.5h12v12H.5zM4.500 0v13M8.500 0v13M0 4.500h13M0 8.500h13" fill="none" stroke="#333" /></svg>
          </ViewBtn>
          <ViewBtn>
            <svg width="14" height="13" viewBox="0 0 14 13"><path d="M.5.5h13v12H.5zM3.500 3.500h7v6h-7zM5 5.500h4M5 7.500h4" fill="none" stroke="#444" /></svg>
          </ViewBtn>
          <ViewBtn>
            <svg width="14" height="13" viewBox="0 0 14 13"><path d="M.5 0v12.500h13V0M.5 7.500h7V0M7.500.5h6" fill="none" stroke="#444" /></svg>
          </ViewBtn>
          <Slot $w={8} $ml={6}>
            <svg width="8" height="1" viewBox="0 0 8 1"><path d="M0 .5h8" stroke="#444" /></svg>
          </Slot>
          <ZoomTrack />
          <Slot $w={8} $ml={4}>
            <svg width="8" height="8" viewBox="0 0 8 8"><path d="M0 4h8M4 0v8" stroke="#444" /></svg>
          </Slot>
          <ZoomPct>100%</ZoomPct>
        </StatusBar>
      </Main>
    </Window>
  );
}
